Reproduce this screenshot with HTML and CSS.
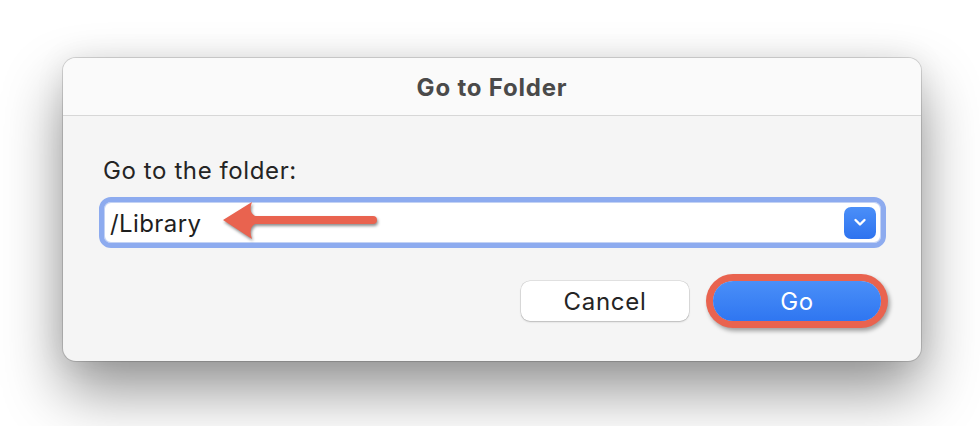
FILE: index.html
```html
<!DOCTYPE html>
<html lang="en">
<head>
  <meta charset="UTF-8" />
  <title>Go to Folder</title>
  <meta name="viewport" content="width=device-width, initial-scale=1.0" />
  <link rel="stylesheet" href="styles.css">
</head>
<body>

  <div class="dialog">
    <div class="titlebar">Go to Folder</div>

    <div class="content">
      <label class="label" for="path">Go to the folder:</label>

      <div class="field">
        <span class="path" id="path">/Library</span>
        <button class="dropdown" type="button" aria-label="Recent folders">
          <svg width="14" height="9" viewBox="0 0 14 9">
            <path d="M2.5 2 L7 6.5 L11.5 2" fill="none" stroke="#fff" stroke-width="2.4" stroke-linecap="round" stroke-linejoin="round"/>
          </svg>
        </button>

        <!-- annotation arrow -->
        <svg class="arrow" width="170" height="50" viewBox="0 0 170 50">
          <path d="M8 24 L37 6 Q33 16 40 20 L158 20 Q162 20 162 24 Q162 28 158 28 L40 28 Q33 32 37 43 Z" fill="#e9634f"/>
        </svg>
      </div>

      <div class="actions">
        <button class="btn" type="button">Cancel</button>
        <button class="btn btn-primary" type="button">Go</button>
      </div>
    </div>
  </div>

</body>
</html>
```

FILE: styles.css
```css
html, body {
  height: 426px;
}

body {
  margin: 0;
  padding: 58px 0 0 63px;
  box-sizing: border-box;
  overflow: hidden;
  background: #ffffff;
  font-family: 'Inter', 'Liberation Sans', sans-serif;
  color: #1f1f1f;
}

.dialog {
  width: 858px;
  height: 303px;
  box-sizing: border-box;
  background: #f5f5f5;
  border-radius: 13px;
  box-shadow: 0 0 0 1px rgba(0, 0, 0, 0.14),
              0 30px 60px rgba(0, 0, 0, 0.42),
              0 0 30px rgba(0, 0, 0, 0.08);
  overflow: hidden;
}

.titlebar {
  height: 56px;
  display: flex;
  align-items: center;
  justify-content: center;
  background: #fafafa;
  border-bottom: 1px solid #d7d7d7;
  font-size: 24px;
  font-weight: 700;
  color: #4a4a4a;
  letter-spacing: 0.8px;
  padding-top: 1px;
}

.content {
  padding: 41px 35px 0 36px;
}

.label {
  display: block;
  font-size: 24px;
  line-height: 28px;
  letter-spacing: 0.6px;
  color: #242424;
  margin-left: 4px;
  margin-bottom: 12px;
}

.field {
  position: relative;
  height: 51px;
  box-sizing: border-box;
  border: 5px solid #8dabef;
  border-radius: 12px;
  background: #ffffff;
  box-shadow: inset 0 0 0 1px #c3d2f4;
  display: flex;
  align-items: center;
  justify-content: space-between;
  padding: 0 5px 0 6px;
}

.path {
  font-size: 24px;
  letter-spacing: 0.4px;
  color: #1e1e1e;
  padding-top: 2px;
}

.dropdown {
  width: 32px;
  height: 32px;
  border: none;
  border-radius: 7px;
  background: linear-gradient(#4b8ff8, #2e73ef);
  display: flex;
  align-items: center;
  justify-content: center;
  padding: 0;
}

.arrow {
  position: absolute;
  left: 111px;
  top: -6px;
  filter: drop-shadow(1px 2px 1.5px rgba(0, 0, 0, 0.45));
}

.actions {
  display: flex;
  justify-content: flex-end;
  align-items: center;
  gap: 24px;
  margin-top: 33px;
  padding-right: 5px;
}

.btn {
  width: 168px;
  height: 40px;
  border: none;
  border-radius: 9px;
  background: #ffffff;
  box-shadow: 0 0 0 0.5px rgba(0, 0, 0, 0.15), 0 1px 2px rgba(0, 0, 0, 0.18);
  font-family: 'Inter', 'Liberation Sans', sans-serif;
  font-size: 24px;
  letter-spacing: 0.7px;
  color: #242424;
}

.btn-primary {
  border-radius: 20px;
  background: linear-gradient(#4a8ff8, #2f76f1);
  color: #ffffff;
  box-shadow: 0 0 0 7px #e9634f, 2px 3px 4px 7px rgba(0, 0, 0, 0.35);
}
```
